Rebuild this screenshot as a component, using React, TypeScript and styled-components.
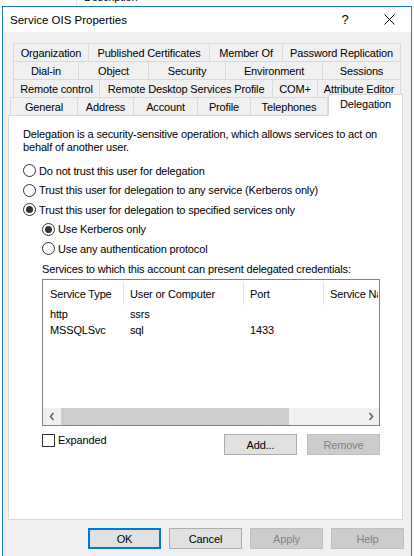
import React from "react";
import styled, { createGlobalStyle, css } from "styled-components";

const UI_FONT = `"Liberation Sans", Arial, sans-serif`;

const Global = createGlobalStyle`
  html, body { margin: 0; padding: 0; background: #ffffff; }
  body { font-family: ${UI_FONT}; font-size: 11px; letter-spacing: -0.15px; color: #000; overflow: hidden; }
  * { box-sizing: border-box; }
`;

const Page = styled.div`
  width: 414px;
  height: 556px;
  overflow: hidden;
  background: #ffffff;
`;

const Backdrop = styled.div`
  height: 6px;
  display: flex;
  overflow: hidden;
`;

const BackdropDivider = styled.div`
  width: 1px;
  margin-left: 76px;
  background: #e5e5e5;
`;

const BackdropText = styled.div`
  margin-left: 7px;
  margin-top: -9px;
  line-height: 13px;
  font-size: 11px;
`;

const Window = styled.div`
  margin-left: 2px;
  width: 410px;
  height: 552px;
  border: 1px solid #1a7dd6;
  background: #f0f0f0;
  display: flex;
  flex-direction: column;
`;

const TitleBar = styled.div`
  height: 25px;
  background: #ffffff;
  display: flex;
  align-items: center;
  padding-left: 7px;
`;

const Title = styled.div`
  flex: 1;
  font-size: 11.5px;
  line-height: 14px;
  letter-spacing: 0;
`;

const CaptionButton = styled.div`
  width: 44px;
  height: 25px;
  display: flex;
  align-items: center;
  justify-content: center;
  font-size: 13px;
`;

const Body = styled.div`
  padding: 11px 8px 0 5px;
  display: flex;
  flex-direction: column;
`;

const TabStrip = styled.div`
  display: flex;
  flex-direction: column;
`;

const TabRow = styled.div<{ $indent: number }>`
  display: flex;
  height: 18px;
  align-items: flex-end;
  margin-left: ${(p) => p.$indent}px;
`;

const Tab = styled.div<{ $w: number; $selected?: boolean; $first?: boolean }>`
  width: ${(p) => p.$w}px;
  height: 18px;
  flex: none;
  border-top: 1px solid #d9d9d9;
  border-right: 1px solid #d9d9d9;
  ${(p) => (p.$first ? "border-left: 1px solid #d9d9d9;" : "")}
  background: #f0f0f0;
  display: flex;
  align-items: center;
  justify-content: center;
  white-space: nowrap;
  line-height: 14px;
  ${(p) =>
    p.$selected &&
    css`
      position: relative;
      z-index: 2;
      height: 22px;
      margin-bottom: -1px;
      border-left: 1px solid #d9d9d9;
      background: #ffffff;
      padding-bottom: 4px;
    `}
`;

const Panel = styled.div`
  height: 405px;
  background: #ffffff;
  border: 1px solid #d9d9d9;
  padding: 12px 0 0 14px;
  display: flex;
  flex-direction: column;
`;

const Description = styled.div`
  line-height: 13px;
  white-space: nowrap;
`;

const RadioList = styled.div`
  margin-top: 7px;
  display: flex;
  flex-direction: column;
`;

const RadioRow = styled.div<{ $nested?: boolean }>`
  height: 19.5px;
  display: flex;
  align-items: center;
  padding-left: ${(p) => (p.$nested ? 19 : 0)}px;
  white-space: nowrap;
`;

const RadioCircle = styled.span<{ $checked?: boolean }>`
  width: 13px;
  height: 13px;
  border-radius: 50%;
  border: 1px solid #333333;
  background: #ffffff;
  margin-right: 3px;
  display: flex;
  align-items: center;
  justify-content: center;
  flex: none;
  &::after {
    content: "";
    width: 7px;
    height: 7px;
    border-radius: 50%;
    background: ${(p) => (p.$checked ? "#333333" : "transparent")};
  }
`;

const Nested = styled.div`
  margin-left: 19px;
  width: 338px;
  display: flex;
  flex-direction: column;
`;

const ListLabel = styled.div`
  margin-top: 4.5px;
  line-height: 13px;
  white-space: nowrap;
`;

const ListBox = styled.div`
  margin-top: 3px;
  height: 147px;
  border: 1px solid #828282;
  background: #ffffff;
  display: flex;
  flex-direction: column;
  overflow: hidden;
`;

const HeaderRow = styled.div`
  height: 26px;
  display: flex;
  flex: none;
`;

const HeaderCell = styled.div<{ $w?: number; $pad: number }>`
  ${(p) => (p.$w ? `width: ${p.$w}px; flex: none;` : "flex: 1;")}
  padding-left: ${(p) => p.$pad}px;
  display: flex;
  align-items: center;
  white-space: nowrap;
  overflow: hidden;
  border-right: 1px solid ${(p) => (p.$w ? "#e5e5e5" : "transparent")};
  margin: 2px 0 1px;
`;

const DataRow = styled.div`
  height: 16px;
  display: flex;
  flex: none;
  align-items: center;
`;

const DataCell = styled.div<{ $w?: number; $pad: number }>`
  ${(p) => (p.$w ? `width: ${p.$w}px; flex: none;` : "flex: 1;")}
  padding-left: ${(p) => p.$pad}px;
  white-space: nowrap;
`;

const ListFill = styled.div`
  flex: 1;
`;

const ScrollBar = styled.div`
  height: 17px;
  flex: none;
  display: flex;
  background: #f0f0f0;
`;

const ScrollArrow = styled.div`
  width: 17px;
  display: flex;
  align-items: center;
  justify-content: center;
  flex: none;
`;

const ScrollTrack = styled.div`
  flex: 1;
  display: flex;
  padding-left: 1px;
`;

const ScrollThumb = styled.div`
  width: 228px;
  background: #cdcdcd;
`;

const ActionRow = styled.div`
  margin-top: 8px;
  display: flex;
  justify-content: space-between;
  align-items: flex-start;
`;

const CheckGroup = styled.div`
  display: flex;
  align-items: flex-start;
  line-height: 13px;
  height: 14px;
`;

const CheckBox = styled.span`
  width: 13px;
  height: 13px;
  border: 1px solid #333333;
  background: #ffffff;
  margin-right: 3px;
  flex: none;
`;

const ButtonGroup = styled.div<{ $gap: number }>`
  display: flex;
  gap: ${(p) => p.$gap}px;
`;

const Button = styled.div<{ $disabled?: boolean; $default?: boolean }>`
  width: 73px;
  height: 21px;
  display: flex;
  align-items: center;
  justify-content: center;
  background: #e1e1e1;
  border: 1px solid #adadad;
  ${(p) =>
    p.$default &&
    css`
      border: 2px solid #0078d7;
    `}
  ${(p) =>
    p.$disabled &&
    css`
      background: #cccccc;
      border-color: #bfbfbf;
      color: #838383;
    `}
`;

const DialogButtons = styled.div`
  margin-top: 8px;
  margin-right: -1px;
  display: flex;
  justify-content: flex-end;
  gap: 8px;
`;

const Chevron = ({ dir }: { dir: "left" | "right" }) => (
  <svg width="6" height="9" viewBox="0 0 6 9">
    <polyline
      points={dir === "left" ? "4.5,1 1.5,4.5 4.5,8" : "1.5,1 4.5,4.5 1.5,8"}
      fill="none"
      stroke="#606060"
      strokeWidth="1.6"
    />
  </svg>
);

const CloseIcon = () => (
  <svg width="11" height="11" viewBox="0 0 11 11">
    <path d="M0.5 0.5 L10.5 10.5 M10.5 0.5 L0.5 10.5" stroke="#000" strokeWidth="1" />
  </svg>
);

type TabDef = { label: string; w: number; selected?: boolean };

const tabRows: { indent: number; tabs: TabDef[] }[] = [
  {
    indent: 5,
    tabs: [
      { label: "Organization", w: 76 },
      { label: "Published Certificates", w: 121 },
      { label: "Member Of", w: 73 },
      { label: "Password Replication", w: 118 },
    ],
  },
  {
    indent: 5,
    tabs: [
      { label: "Dial-in", w: 66 },
      { label: "Object", w: 70 },
      { label: "Security", w: 77 },
      { label: "Environment", w: 97 },
      { label: "Sessions", w: 78 },
    ],
  },
  {
    indent: 5,
    tabs: [
      { label: "Remote control", w: 87 },
      { label: "Remote Desktop Services Profile", w: 173 },
      { label: "COM+", w: 45 },
      { label: "Attribute Editor", w: 83 },
    ],
  },
  {
    indent: 2,
    tabs: [
      { label: "General", w: 68 },
      { label: "Address", w: 56 },
      { label: "Account", w: 64 },
      { label: "Profile", w: 53 },
      { label: "Telephones", w: 77 },
      { label: "Delegation", w: 75, selected: true },
    ],
  },
];

const columns = [
  { title: "Service Type", w: 81, pad: 7 },
  { title: "User or Computer", w: 120, pad: 6 },
  { title: "Port", w: 80, pad: 6 },
  { title: "Service Name", pad: 6 },
];

const services = [
  ["http", "ssrs", "", ""],
  ["MSSQLSvc", "sql", "1433", ""],
];

export default function App() {
  return (
    <Page>
      <Global />
      <Backdrop>
        <BackdropDivider />
        <BackdropText>Description</BackdropText>
      </Backdrop>
      <Window>
        <TitleBar>
          <Title>Service OIS Properties</Title>
          <CaptionButton>?</CaptionButton>
          <CaptionButton>
            <CloseIcon />
          </CaptionButton>
        </TitleBar>
        <Body>
          <TabStrip>
            {tabRows.map((row, ri) => (
              <TabRow key={ri} $indent={row.indent}>
                {row.tabs.map((t, ti) => (
                  <Tab key={t.label} $w={t.w} $first={ti === 0} $selected={t.selected}>
                    {t.label}
                  </Tab>
                ))}
              </TabRow>
            ))}
          </TabStrip>
          <Panel>
            <Description>
              Delegation is a security-sensitive operation, which allows services to act on
              <br />
              behalf of another user.
            </Description>
            <RadioList>
              <RadioRow>
                <RadioCircle />
                Do not trust this user for delegation
              </RadioRow>
              <RadioRow>
                <RadioCircle />
                Trust this user for delegation to any service (Kerberos only)
              </RadioRow>
              <RadioRow>
                <RadioCircle $checked />
                Trust this user for delegation to specified services only
              </RadioRow>
              <RadioRow $nested>
                <RadioCircle $checked />
                Use Kerberos only
              </RadioRow>
              <RadioRow $nested>
                <RadioCircle />
                Use any authentication protocol
              </RadioRow>
            </RadioList>
            <Nested>
              <ListLabel>Services to which this account can present delegated credentials:</ListLabel>
              <ListBox>
                <HeaderRow>
                  {columns.map((c) => (
                    <HeaderCell key={c.title} $w={c.w} $pad={c.pad}>
                      {c.title}
                    </HeaderCell>
                  ))}
                </HeaderRow>
                {services.map((row, i) => (
                  <DataRow key={i}>
                    {row.map((v, j) => (
                      <DataCell key={j} $w={columns[j].w} $pad={columns[j].pad}>
                        {v}
                      </DataCell>
                    ))}
                  </DataRow>
                ))}
                <ListFill />
                <ScrollBar>
                  <ScrollArrow>
                    <Chevron dir="left" />
                  </ScrollArrow>
                  <ScrollTrack>
                    <ScrollThumb />
                  </ScrollTrack>
                  <ScrollArrow>
                    <Chevron dir="right" />
                  </ScrollArrow>
                </ScrollBar>
              </ListBox>
              <ActionRow>
                <CheckGroup>
                  <CheckBox />
                  Expanded
                </CheckGroup>
                <ButtonGroup $gap={10}>
                  <Button>Add...</Button>
                  <Button $disabled>Remove</Button>
                </ButtonGroup>
              </ActionRow>
            </Nested>
          </Panel>
          <DialogButtons>
            <Button $default>OK</Button>
            <Button>Cancel</Button>
            <Button $disabled>Apply</Button>
            <Button $disabled>Help</Button>
          </DialogButtons>
        </Body>
      </Window>
    </Page>
  );
}
